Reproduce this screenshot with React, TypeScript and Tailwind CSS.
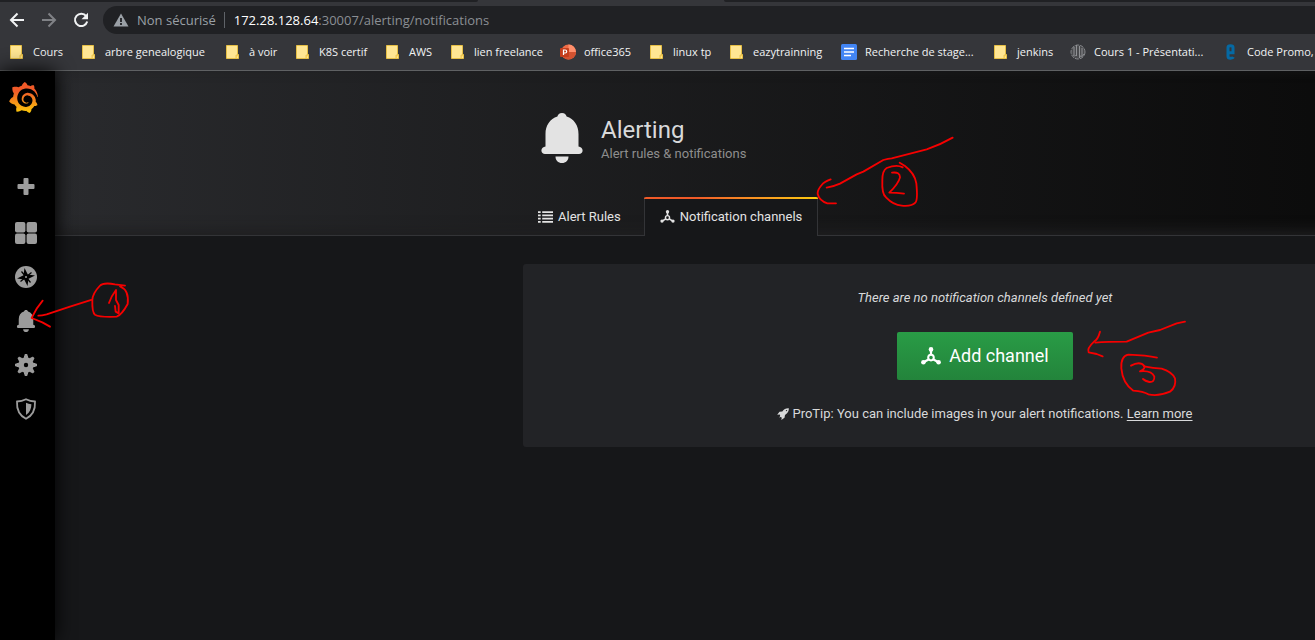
import React from "react";
import { SiGrafana } from "react-icons/si";

type IconProps = { className?: string };

function FolderIcon() {
  return (
    <svg viewBox="0 0 16 16" className="size-4 shrink-0" aria-hidden="true">
      <path d="M1.500 1.500h11v9h1v4h-12z" fill="#ffe693" stroke="#e6bf45" />
      <path d="M11 14.500V11h2.500" fill="#ffd868" stroke="#e6bf45" strokeWidth=".8" />
    </svg>
  );
}

function PowerPointIcon() {
  return (
    <svg viewBox="0 0 16 16" className="size-4 shrink-0" aria-hidden="true">
      <circle cx="8.500" cy="8" r="7.500" fill="#ed6c47" />
      <path d="M8.500.5A7.500 7.500 0 0 1 16 8H8.500z" fill="#ff8f6b" />
      <path d="M1 8h15a7.500 7.500 0 0 1-15 0z" fill="#d35230" />
      <rect x="0" y="4" width="9" height="9" rx="1" fill="#c43e1c" />
      <path d="M3.500 11V6h1.700a1.500 1.500 0 0 1 0 3H3.500" fill="none" stroke="#fff" strokeWidth="1.200" />
    </svg>
  );
}

function DocIcon() {
  return (
    <svg viewBox="0 0 16 16" className="size-4 shrink-0" aria-hidden="true">
      <rect width="16" height="16" rx="1.500" fill="#4285f4" />
      <path d="M3 4.500h10M3 8h10M3 11.500h7" stroke="#fff" strokeWidth="1.600" />
    </svg>
  );
}

function GlobeIcon() {
  return (
    <svg viewBox="0 0 16 16" className="size-4 shrink-0" aria-hidden="true">
      <circle cx="8" cy="8" r="7" fill="#4a4b4e" stroke="#85878a" strokeDasharray="4 1" />
      <path d="M4 3v8M6.500 1v11M9.500 2v12M12 4v8M3 11c2 2 3 0 4-1m3 2c2 1 3 0 4-2" fill="none" stroke="#909295" strokeWidth="1" />
    </svg>
  );
}

function PromoIcon() {
  return (
    <svg viewBox="0 0 16 16" className="size-4 shrink-0" aria-hidden="true">
      <path d="M5 8.700h5V3.500Q10 1.700 7.500 1.700T5 3.500v8.700q0 2 2.500 2t3-1" fill="none" stroke="#0569a3" strokeWidth="3" />
    </svg>
  );
}

function ChannelIcon({ className }: IconProps) {
  return (
    <svg viewBox="0 0 20 18" className={className} fill="currentColor" aria-hidden="true">
      <circle cx="10" cy="2.400" r="2.300" />
      <circle cx="2.400" cy="15.300" r="2.300" />
      <circle cx="17.600" cy="15.300" r="2.300" />
      <path d="M10 3v5M3 15l4.500-2.500M17 15l-4.500-2.500" stroke="currentColor" strokeWidth="2.200" />
      <circle cx="10" cy="10.600" r="2.800" fill="none" stroke="currentColor" strokeWidth="2" />
    </svg>
  );
}

function ListIcon({ className }: IconProps) {
  return (
    <svg viewBox="0 0 15 12" className={className} fill="currentColor" aria-hidden="true">
      <path d="M0 .2h2.700v1.800H0zM0 3.400h2.700v1.800H0zM0 6.700h2.700v1.800H0zM0 10h2.700v1.800H0zM4.200.2H15v1.800H4.200zM4.200 3.400H15v1.800H4.200zM4.200 6.700H15v1.800H4.200zM4.200 10H15v1.800H4.200z" />
    </svg>
  );
}

function RocketIcon({ className }: IconProps) {
  return (
    <svg viewBox="0 0 12 12" className={className} fill="currentColor" aria-hidden="true">
      <path
        fillRule="evenodd"
        d="M11.800.2C9 0 7 1.200 5.300 3.400L2.500 3.700.2 6.700l2.600-.3L3.200 8l-1 1.600L3.800 9l1 .7-.5 2.200 3.200-2.100.5-2.900C10.800 5 12 3 11.800.2zM9.500 1.900a.7.700 0 1 1 0 1.400.7.700 0 0 1 0-1.400z"
      />
    </svg>
  );
}

function BellIcon({ className }: IconProps) {
  return (
    <svg viewBox="0 0 42 50" className={className} fill="currentColor" aria-hidden="true">
      <path d="M21 0c2.600 0 4.200 1.500 4.600 3.600C33 6 37.500 12.500 37.500 21v12.500c2.200.4 4.100 1.800 4.100 4 0 2.300-1.600 3.500-3.600 3.500H4C2 41 .4 39.800.4 37.500c0-2.200 1.900-3.600 4.100-4V21C4.500 12.500 9 6 16.400 3.600 16.800 1.500 18.400 0 21 0zM14.500 43.500h13c0 4-2.700 6.500-6.500 6.500s-6.500-2.500-6.500-6.500z" />
    </svg>
  );
}

function PlusIcon({ className }: IconProps) {
  return (
    <svg viewBox="0 0 22 22" className={className} fill="currentColor" aria-hidden="true">
      <path d="M9.500 0h3q1 0 1 1v5h5q1 0 1 1v3q0 1-1 1h-5v5q0 1-1 1h-3q-1 0-1-1v-5h-5q-1 0-1-1V7q0-1 1-1h5V1q0-1 1-1z" />
    </svg>
  );
}

function GridIcon({ className }: IconProps) {
  return (
    <svg viewBox="0 0 22 22" className={className} fill="currentColor" aria-hidden="true">
      <rect width="10.400" height="10.400" rx="2" />
      <rect x="11.600" width="10.400" height="10.400" rx="2" />
      <rect y="11.600" width="10.400" height="10.400" rx="2" />
      <rect x="11.600" y="11.600" width="10.400" height="10.400" rx="2" />
    </svg>
  );
}

function CompassIcon({ className }: IconProps) {
  return (
    <svg viewBox="0 0 22 22" className={className} aria-hidden="true">
      <circle cx="11" cy="11" r="11" fill="currentColor" />
      <path d="M9.500 2l3.300 6.500L20 9.500l-6.500 3.300L12.500 20l-3.300-6.500L2 12.500l6.500-3.300z" fill="#000" />
      <path d="M6.500 5.500l9 11M16.500 6.500l-11 9" stroke="#000" strokeWidth="1.200" />
      <circle cx="11" cy="11" r="1" fill="currentColor" />
    </svg>
  );
}

function GearIcon({ className }: IconProps) {
  return (
    <svg viewBox="0 0 22 22" className={className} aria-hidden="true">
      <path d="M11 1.500v19M1.500 11h19M4.300 4.300l13.400 13.400M17.700 4.300L4.300 17.700" stroke="currentColor" strokeWidth="4" />
      <path d="M11 0v22M0 11h22M3.300 3.300l15.400 15.400M18.700 3.300L3.300 18.700" stroke="currentColor" strokeWidth="2.600" />
      <circle cx="11" cy="11" r="7.800" fill="currentColor" />
      <circle cx="11" cy="11" r="2.200" fill="#000" />
    </svg>
  );
}

function ShieldIcon({ className }: IconProps) {
  return (
    <svg viewBox="0 0 22 22" className={className} aria-hidden="true">
      <path
        d="M11 1.200C8.500 2.500 5 3.400 2 3.500 1.600 11 4.500 17.500 11 20.800 17.500 17.500 20.400 11 20 3.500 17 3.400 13.500 2.500 11 1.200z"
        fill="none"
        stroke="currentColor"
        strokeWidth="1.800"
      />
      <path d="M11 4.800c1.600.8 3.400 1.300 5.400 1.500 0 4.700-1.800 8.300-5.400 10.700z" fill="currentColor" />
    </svg>
  );
}

const bookmarks = [
  { label: "Cours", icon: FolderIcon, width: "w-[72px]" },
  { label: "arbre genealogique", icon: FolderIcon, width: "w-36" },
  { label: "à voir", icon: FolderIcon, width: "w-[70px]" },
  { label: "K8S certif", icon: FolderIcon, width: "w-[90px]" },
  { label: "AWS", icon: FolderIcon, width: "w-[65px]" },
  { label: "lien freelance", icon: FolderIcon, width: "w-[110px]" },
  { label: "office365", icon: PowerPointIcon, width: "w-[89px]" },
  { label: "linux tp", icon: FolderIcon, width: "w-20" },
  { label: "eazytrainning", icon: FolderIcon, width: "w-28" },
  { label: "Recherche de stage...", icon: DocIcon, width: "w-[152px]" },
  { label: "jenkins", icon: FolderIcon, width: "w-[77px]" },
  { label: "Cours 1 - Présentati...", icon: GlobeIcon, width: "w-[153px]" },
  { label: "Code Promo,", icon: PromoIcon, width: "w-28" },
];

const navItems = [
  { label: "Create", icon: PlusIcon },
  { label: "Dashboards", icon: GridIcon },
  { label: "Explore", icon: CompassIcon },
  { label: "Alerting", icon: BellIcon },
  { label: "Configuration", icon: GearIcon },
  { label: "Server Admin", icon: ShieldIcon },
];

function BrowserBar() {
  return (
    <header className="border-b border-[#5f6163] bg-[#35363a] font-['Open_Sans',sans-serif]">
      <div className="flex h-0.5">
        <div className="w-[478px] rounded-br-sm bg-[#202124]" />
        <div className="w-[246px]" />
        <div className="flex-1 rounded-bl-sm bg-[#202124]" />
      </div>
      <div className="flex h-8 items-center pt-1">
        <div className="flex w-[103px] shrink-0 items-center gap-4 pl-[9px]">
          <button aria-label="Back" className="text-[#f1f3f4]">
            <svg viewBox="0 0 16 16" className="size-4" fill="none" stroke="currentColor" strokeWidth="2">
              <path d="M15 8H2.500M8.500 1.500L2 8l6.500 6.500" />
            </svg>
          </button>
          <button aria-label="Forward" className="text-[#808286]">
            <svg viewBox="0 0 16 16" className="size-4" fill="none" stroke="currentColor" strokeWidth="2">
              <path d="M1 8h12.500M7.500 1.500L14 8l-6.500 6.500" />
            </svg>
          </button>
          <button aria-label="Reload" className="text-[#f1f3f4]">
            <svg viewBox="0 0 16 16" className="size-4" fill="none" stroke="currentColor" strokeWidth="2">
              <path d="M13.200 4.200A6.200 6.200 0 1 0 14.200 9.500" />
              <path d="M15 .8v6.400H8.500z" fill="currentColor" stroke="none" />
            </svg>
          </button>
        </div>
        <div className="flex h-7 flex-1 items-center rounded-l-full bg-[#202124] pl-2.5 text-[13px] leading-5 text-[#9aa0a6]">
          <svg viewBox="0 0 16 14" className="h-3.5 w-4" aria-hidden="true">
            <path d="M8 .5L15.500 13.500H.5z" fill="#9aa0a6" />
            <path d="M8 5v4M8 10v2" stroke="#202124" strokeWidth="1.800" />
          </svg>
          <span className="pl-2">Non sécurisé</span>
          <span className="ml-2 mr-[9px] h-4 w-px bg-[#5f6368]" />
          <span className="text-[#8b8f94]">
            <span className="text-white">172.28.128.64</span>:30007/alerting/notifications
          </span>
        </div>
      </div>
      <nav aria-label="Bookmarks" className="flex h-9 items-center overflow-hidden pl-[9px] text-[11px] leading-4 text-[#f1f3f4]">
        {bookmarks.map(({ label, icon: Icon, width }) => (
          <a key={label} href="#" className={`flex shrink-0 items-center gap-2 whitespace-nowrap ${width}`}>
            <Icon />
            {label}
          </a>
        ))}
      </nav>
    </header>
  );
}

function Sidebar() {
  return (
    <aside className="relative flex w-[55px] shrink-0 flex-col bg-black shadow-[0_0_20px_#000]">
      <a href="#" aria-label="Home" className="ml-2 mt-[11px] flex">
        <svg width="0" height="0" aria-hidden="true">
          <linearGradient id="flame" x1="0" y1="0" x2="0" y2="1">
            <stop offset="0" stopColor="#f05a28" />
            <stop offset="0.300" stopColor="#f05a28" />
            <stop offset="1" stopColor="#fbca0a" />
          </linearGradient>
        </svg>
        <SiGrafana className="size-[31px]" fill="url(#flame)" />
      </a>
      <nav aria-label="Main" className="mt-[65px] flex flex-col items-center gap-[22px] pr-[3px] text-[#9c9c9c]">
        {navItems.map(({ label, icon: Icon }) => (
          <a key={label} href="#" aria-label={label}>
            <Icon className="size-[22px]" />
          </a>
        ))}
      </nav>
    </aside>
  );
}

function PageHeader() {
  return (
    <div className="-mr-10 border-b border-[#333437] bg-linear-to-r from-[#292a2d] to-[#0b0b0b] shadow-[inset_0_-4px_14px_#1f1f20]">
      <div className="ml-[468px] w-[924px]">
        <div className="flex h-[126px] items-start gap-[18px] pl-[18px] pt-[42px]">
          <BellIcon className="h-[50px] w-[42px] text-[#e3e3e3]" />
          <div className="pt-px">
            <h1 className="text-2xl leading-8 text-[#d8d9da]">Alerting</h1>
            <p className="text-[13px] leading-4 text-[#8e8e8e]">Alert rules &amp; notifications</p>
          </div>
        </div>
        <nav aria-label="Alerting" className="-mb-px flex h-[39px] text-[13px] leading-5 text-[#e3e3e3]">
          <a href="#" className="flex items-center gap-[5px] pl-[15px] pr-[23px]">
            <ListIcon className="h-3 w-[15px]" />
            Alert Rules
          </a>
          <a href="#" className="flex flex-col border-x border-[#333437] bg-[#161719]">
            <span className="-mx-px h-0.5 rounded-t-sm bg-linear-to-r from-[#f05a28] from-30% to-[#fbca0a]" />
            <span className="flex flex-1 items-center gap-[5px] px-[15px] pb-0.5">
              <ChannelIcon className="h-[13px] w-[15px]" />
              Notification channels
            </span>
          </a>
        </nav>
      </div>
    </div>
  );
}

function EmptyState() {
  return (
    <section className="ml-[468px] mt-7 flex w-[924px] flex-col items-center rounded-[3px] bg-[#222326] pb-[23px] pt-6 text-[13px] leading-5 text-[#d8d9da]">
      <p className="italic">There are no notification channels defined yet</p>
      <button className="mt-6 flex h-12 w-44 items-center justify-center gap-2 rounded-[2px] bg-linear-to-b from-[#299c46] to-[#23843b] text-lg text-white">
        <ChannelIcon className="h-[18px] w-5" />
        Add channel
      </button>
      <p className="mt-6 flex items-center gap-[3px]">
        <RocketIcon className="size-3" />
        <span>
          ProTip: You can include images in your alert notifications.{" "}
          <a href="#" className="underline underline-offset-2">
            Learn more
          </a>
        </span>
      </p>
    </section>
  );
}

function Annotations() {
  return (
    <svg
      width="1315"
      height="640"
      viewBox="0 0 1315 640"
      className="pointer-events-none absolute left-0 top-0"
      fill="none"
      stroke="#f60000"
      strokeLinecap="round"
      strokeLinejoin="round"
      aria-hidden="true"
    >
      <g transform="translate(0 250) scale(.33333)" strokeWidth="5.500">
        <path d="M274 150L210 170 140 193Q125 197 115 197" />
        <path d="M128 152Q108 175 95 204L127 217 150 230" />
        <path d="M375 107L345 103Q310 96 299 108 278 130 277 150 276 188 285 194 298 202 350 200 365 195 383 162 388 120 360 109" />
        <path d="M327 159Q334 138 348 120L348 150 356 165 356 190 347 185 345 168" />
      </g>
      <g transform="translate(800 120) scale(.33333)" strokeWidth="5.500">
        <path d="M80 203Q100 200 120 191L170 163 190 155 250 120Q265 115 275 115L380 88Q420 75 458 53" />
        <path d="M92 178Q72 185 65 195 52 210 53 222 58 242 82 250L108 250" />
        <path d="M308 142Q290 132 260 144 247 152 247 180 245 222 258 232 280 255 305 257 335 260 346 248 354 240 349 190 344 160 315 138L299 128" />
        <path d="M276 158Q300 155 300 172 296 190 268 218 290 218 312 221" />
      </g>
      <g transform="translate(760 320) scale(.33333)" strokeWidth="5.500">
        <path d="M1006 68Q1040 65 1100 65L1165 38 1200 30 1250 10 1275 5" />
        <path d="M1020 35Q1014 58 1003 64 980 85 986 97L1010 102 1028 109" />
        <path d="M1191 113Q1160 106 1105 104 1082 108 1084 145 1088 190 1120 212 1150 214 1165 223 1195 230 1230 215 1250 200 1245 175 1235 155 1205 146 1180 145 1152 139" />
        <path d="M1113 137Q1140 122 1153 138 1157 146 1140 154 1175 150 1183 170 1184 187 1168 186 1155 183 1149 177" />
      </g>
    </svg>
  );
}

export default function App() {
  return (
    <div className="relative flex min-h-screen flex-col overflow-hidden bg-[#161719] font-[Roboto,sans-serif]">
      <BrowserBar />
      <div className="flex flex-1">
        <Sidebar />
        <main className="min-w-0 flex-1 overflow-hidden">
          <PageHeader />
          <EmptyState />
        </main>
      </div>
      <Annotations />
    </div>
  );
}
